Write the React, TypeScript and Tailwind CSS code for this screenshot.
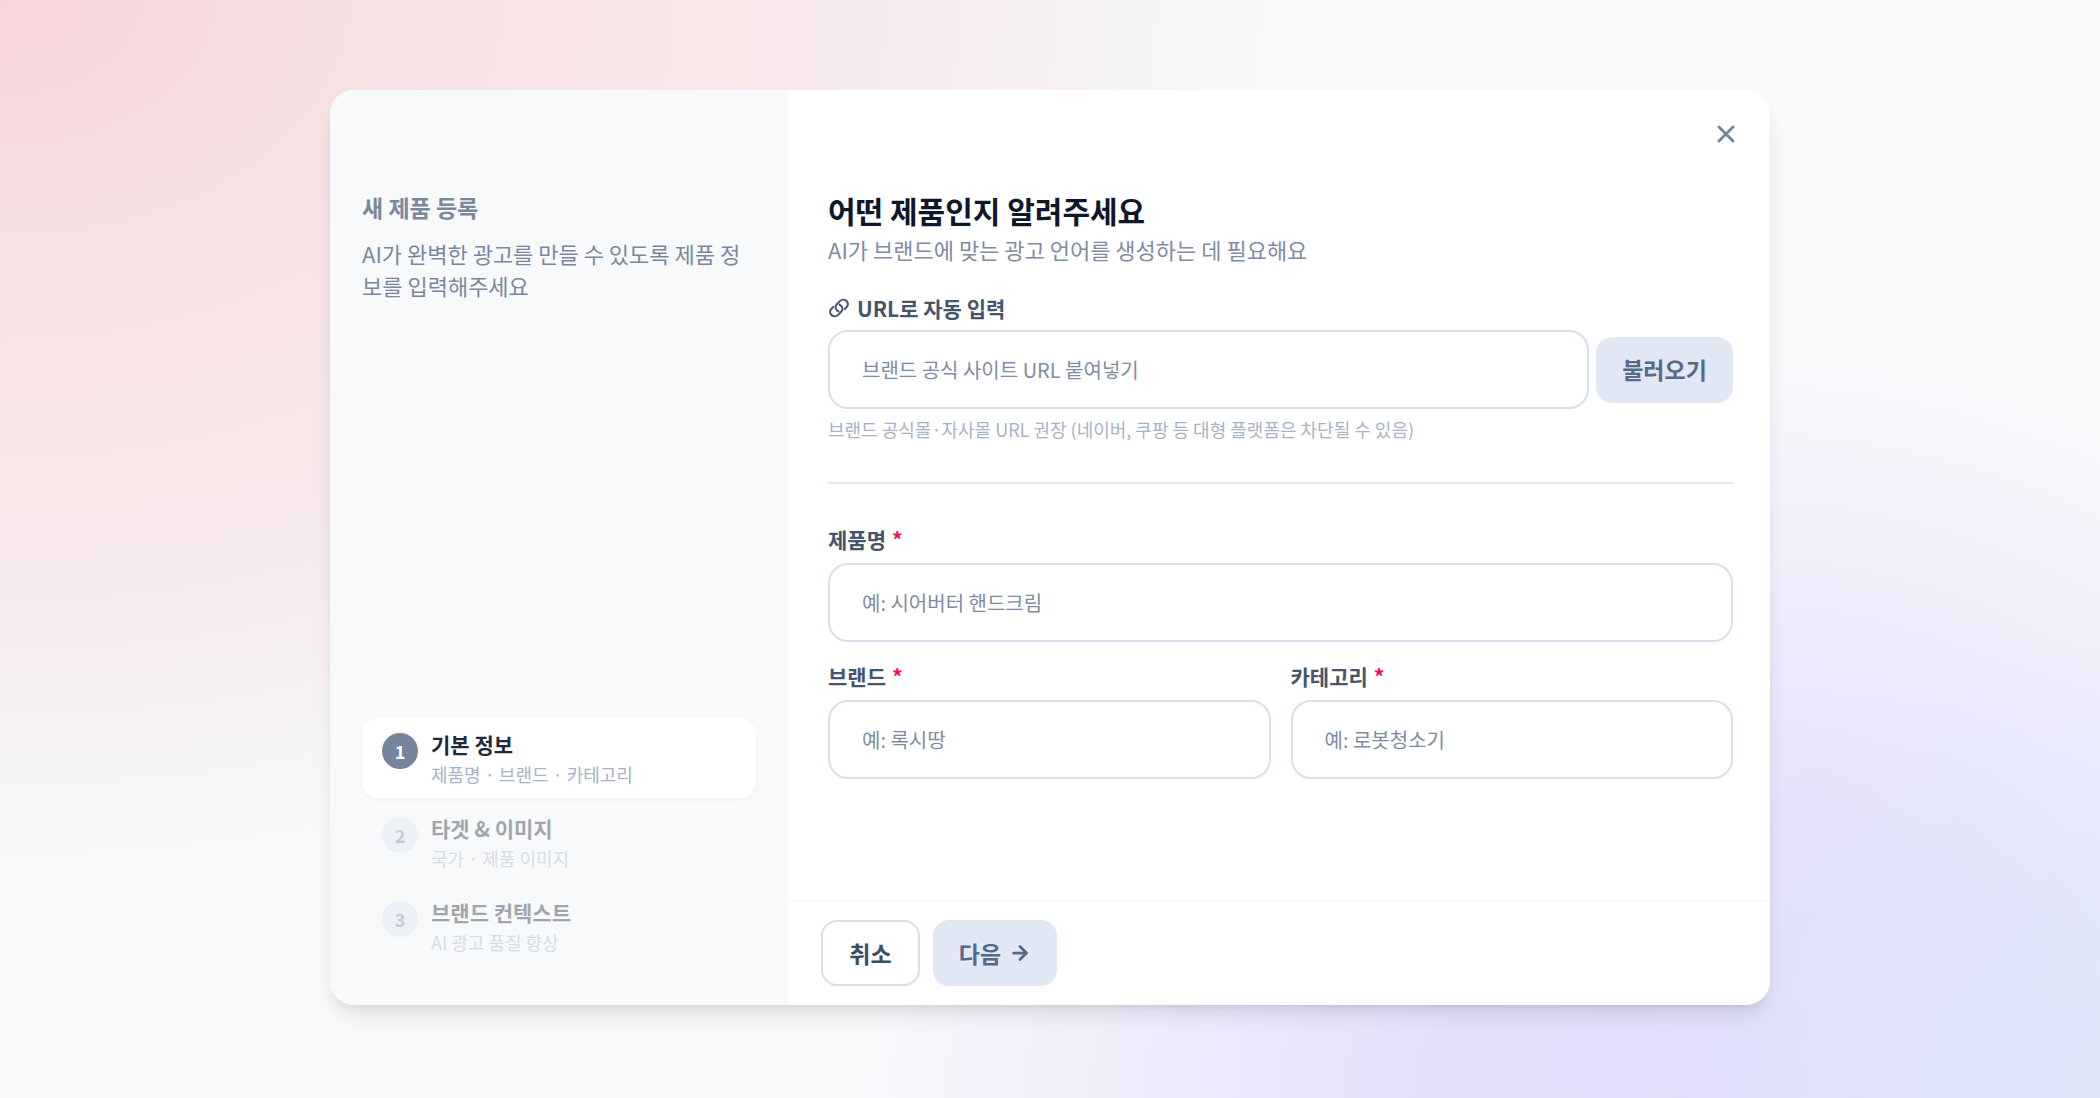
import { useState } from "react";
import { ArrowRight, X } from "lucide-react";
import clsx from "clsx";

interface Step {
  title: string;
  description: string;
}

interface FieldProps {
  id: string;
  label: string;
  placeholder: string;
}

const steps: Step[] = [
  { title: "기본 정보", description: "제품명 · 브랜드 · 카테고리" },
  { title: "타겟 & 이미지", description: "국가 · 제품 이미지" },
  { title: "브랜드 컨텍스트", description: "AI 광고 품질 향상" },
];

const inputClass =
  "w-full min-w-0 h-[79px] px-8 rounded-[20px] border-2 border-[#d6dfed] bg-white text-xl text-slate-700 placeholder:text-[#7f8ca3] outline-none focus:border-slate-400";

const LinkIcon = () => (
  <svg viewBox="0 0 24 24" className="size-[22px]" fill="none" stroke="currentColor" strokeWidth="2.2" strokeLinecap="round" strokeLinejoin="round" aria-hidden="true">
    <path d="M12.6 8.4a5 4.7 0 0 1 2 7.4l-3.6 3.7a5 4.7 0 0 1-7.4-6.4l2.2-2.3" />
    <path d="M11.4 15.6a5 4.7 0 0 1-2-7.4l3.6-3.7a5 4.7 0 0 1 7.4 6.4l-2.2 2.3" />
  </svg>
);

const Field = ({ id, label, placeholder }: FieldProps) => (
  <div className="flex-1 min-w-0">
    <label htmlFor={id} className="flex gap-1.5 mb-2 text-[21px] leading-8 font-semibold text-[#44556d]">
      {label}
      <span className="text-[#ff0a5b]">*</span>
    </label>
    <input id={id} type="text" placeholder={placeholder} className={inputClass} />
  </div>
);

const App = () => {
  const [current, setCurrent] = useState(0);

  return (
    <div className="relative flex min-h-screen justify-center bg-[#f7f9fb] bg-[radial-gradient(ellipse_1300px_880px_at_0%_0%,#f8d3da_0%,#f6e1e3_28%,#f6e9eb_65%,#f6f2f3_84%,#f7f9fb00_100%),radial-gradient(ellipse_480px_460px_at_100%_100%,#dfe7fb_0%,#dfe7fb00_100%),radial-gradient(ellipse_860px_740px_at_82%_100%,#e1ddfb_0%,#e4e0fb_35%,#f7f9fb00_100%)] px-8 pt-[90px] pb-[93px] font-['Noto_Sans_CJK_KR',sans-serif]">
      <div className="relative flex w-full max-w-[1440px] overflow-hidden rounded-3xl bg-white shadow-[0_13px_20px_-4px_rgba(0,0,0,0.1),0_5px_8px_-5px_rgba(0,0,0,0.1)]">
        {/* 단계 안내 */}
        <aside className="flex w-[458px] shrink-0 flex-col justify-between bg-[#f7f9fb] px-8 pt-[99px] pb-[39px]">
          <div>
            <h2 className="text-[23px] leading-9 font-bold text-[#7a889f]">새 제품 등록</h2>
            <p className="mt-3 text-[22px] leading-8 break-all text-[#7a889f]">
              AI가 완벽한 광고를 만들 수 있도록 제품 정보를 입력해주세요
            </p>
          </div>

          <ol className="flex flex-col gap-1">
            {steps.map((step, index) => (
              <li
                key={step.title}
                className={clsx(
                  "flex h-20 gap-[13px] rounded-2xl px-5 pt-[15px]",
                  index === current ? "bg-white shadow-[0_2px_4px_rgba(0,0,0,0.03)]" : "opacity-40"
                )}
              >
                <span
                  className={clsx(
                    "flex size-9 shrink-0 items-center justify-center rounded-full text-lg font-bold",
                    index === current ? "bg-[#75859c] text-white" : "bg-[#dbe7f0] text-[#75859c]"
                  )}
                >
                  {index + 1}
                </span>
                <div className="-mt-1">
                  <p className="text-[21px] leading-[31px] font-semibold text-[#1d293d]">{step.title}</p>
                  <p className="text-lg leading-7 text-[#a7b3c8]">{step.description}</p>
                </div>
              </li>
            ))}
          </ol>
        </aside>

        {/* 입력 폼 */}
        <form className="flex min-w-0 flex-1 flex-col" onSubmit={(e) => e.preventDefault()}>
          <div className="flex-1 pt-[100px] pr-[37px] pl-10">
            <h1 className="text-[30px] leading-10 font-bold text-[#0f172b]">어떤 제품인지 알려주세요</h1>
            <p className="text-[22px] leading-[38px] text-[#7f8ca3]">AI가 브랜드에 맞는 광고 언어를 생성하는 데 필요해요</p>

            <label htmlFor="url" className="mt-6 mb-1.5 flex items-center gap-[7px] text-[21px] leading-8 font-semibold text-[#44556d]">
              <LinkIcon />
              URL로 자동 입력
            </label>
            <div className="flex items-center gap-[7px]">
              <input id="url" type="url" placeholder="브랜드 공식 사이트 URL 붙여넣기" className={inputClass} />
              <button type="button" className="h-[66px] w-[137px] shrink-0 rounded-2xl bg-[#e1e7f3] text-[23px] font-bold text-[#566a86]">
                불러오기
              </button>
            </div>
            <p className="mt-1.5 text-lg leading-7 text-[#a7b3c8]">
              브랜드 공식몰·자사몰 URL 권장 (네이버, 쿠팡 등 대형 플랫폼은 차단될 수 있음)
            </p>

            <hr className="my-[39px] border-t-2 border-[#e2e8f3]" />

            <Field id="name" label="제품명" placeholder="예: 시어버터 핸드크림" />
            <div className="mt-[18px] flex gap-5">
              <Field id="brand" label="브랜드" placeholder="예: 록시땅" />
              <Field id="category" label="카테고리" placeholder="예: 로봇청소기" />
            </div>
          </div>

          <div className="flex gap-[13px] border-t-2 border-[#f7f9fb] px-[33px] pt-[18px] pb-[19px]">
            <button
              type="button"
              onClick={() => setCurrent(Math.max(0, current - 1))}
              className="h-[66px] w-[99px] rounded-2xl border-2 border-[#d6dfed] bg-white text-[23px] font-bold text-[#3a4b64]"
            >
              취소
            </button>
            <button
              type="submit"
              onClick={() => setCurrent(Math.min(steps.length - 1, current + 1))}
              className="flex h-[66px] w-[124px] items-center justify-center gap-2 rounded-2xl bg-[#e1e7f3] text-[23px] font-bold text-[#566a86]"
            >
              다음
              <ArrowRight className="size-[22px]" strokeWidth={3} />
            </button>
          </div>
        </form>

        <button type="button" aria-label="닫기" className="absolute top-[30px] right-[30px] text-[#75859c]">
          <X className="size-7" strokeWidth={2.5} />
        </button>
      </div>
    </div>
  );
};

export default App;
